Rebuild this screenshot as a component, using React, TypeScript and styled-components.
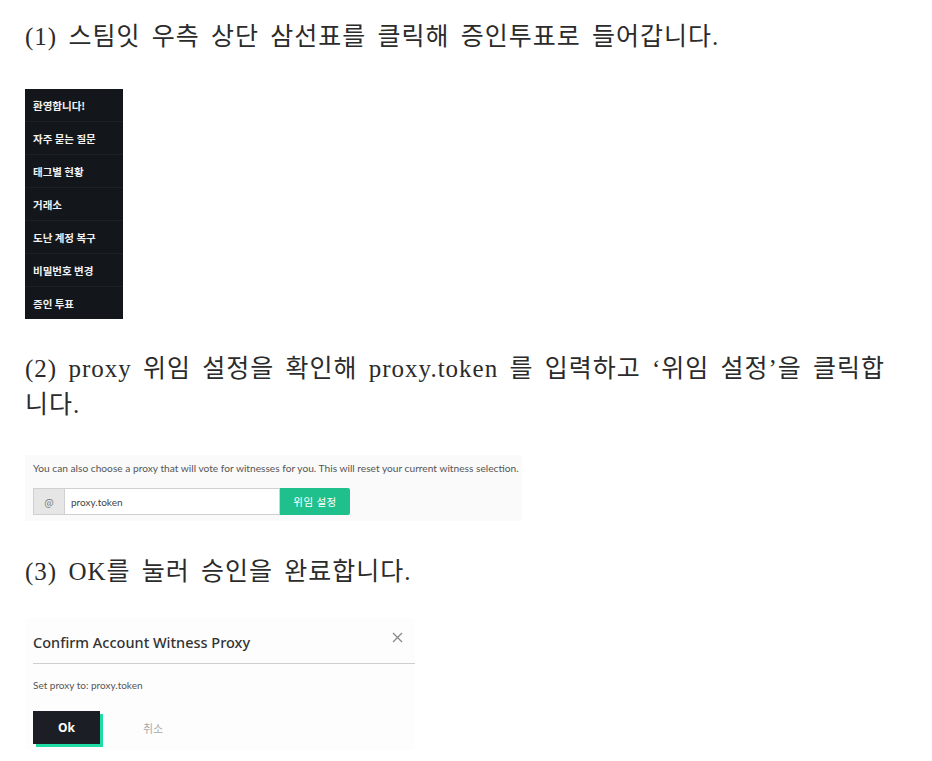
import React from 'react';
import styled, { createGlobalStyle } from 'styled-components';

const GlobalStyle = createGlobalStyle`
  html, body {
    margin: 0;
    padding: 0;
    background: #ffffff;
  }
`;

const Article = styled.article`
  padding: 19px 0 0 25px;
  width: 882px;
  display: flex;
  flex-direction: column;
  align-items: flex-start;
`;

const Step = styled.p<{ $gap?: number }>`
  margin: 0 0 ${(p) => p.$gap ?? 34}px 0;
  font-family: "Liberation Serif", "Noto Sans CJK KR", serif;
  font-size: 25px;
  letter-spacing: 1px;
  word-spacing: 4px;
  line-height: 36px;
  color: #2b2b2b;
`;

const Shot = styled.div<{ $gap?: number }>`
  margin-bottom: ${(p) => p.$gap ?? 32}px;
  font-family: "Noto Sans CJK KR", "Noto Sans", sans-serif;
`;

/* --- menu screenshot --- */
const Menu = styled.ul`
  list-style: none;
  margin: 0;
  padding: 0;
  width: 98px;
  background: #13171c;
`;

const MenuItem = styled.li`
  height: 33px;
  box-sizing: border-box;
  display: flex;
  align-items: center;
  padding-left: 8px;
  font-size: 10.5px;
  font-weight: 700;
  color: #f2f2f2;
  border-bottom: 1px solid #1c2127;
  &:last-child {
    border-bottom: none;
    height: 32px;
  }
`;

/* --- proxy screenshot --- */
const ProxyPanel = styled.div`
  width: 497px;
  height: 66px;
  background: #fafafa;
  padding: 6px 0 0 8px;
  box-sizing: border-box;
`;

const Hint = styled.div`
  font-family: "Lato", "Noto Sans CJK KR", sans-serif;
  font-size: 10.2px;
  color: #555;
  line-height: 14px;
  white-space: nowrap;
`;

const InputRow = styled.div`
  display: flex;
  height: 27px;
  margin-top: 13px;
`;

const Addon = styled.div`
  width: 30px;
  display: flex;
  align-items: center;
  justify-content: center;
  background: #e6e6e6;
  border: 1px solid #d0d0d0;
  border-right: none;
  color: #777;
  font-size: 10px;
`;

const Field = styled.div`
  width: 216px;
  display: flex;
  align-items: center;
  padding-left: 6px;
  box-sizing: border-box;
  background: #fff;
  border: 1px solid #d0d0d0;
  font-family: "Lato", sans-serif;
  font-size: 10px;
  color: #444;
`;

const GreenButton = styled.div`
  width: 70px;
  display: flex;
  align-items: center;
  justify-content: center;
  background: #20c08c;
  border-radius: 0 2px 2px 0;
  color: #fff;
  font-size: 10.5px;
  letter-spacing: 0.5px;
`;

/* --- modal screenshot --- */
const Modal = styled.div`
  width: 390px;
  height: 132px;
  background: #fdfdfd;
  padding: 0 0 0 8px;
  box-sizing: border-box;
`;

const ModalHead = styled.div`
  height: 46px;
  display: flex;
  align-items: center;
  justify-content: space-between;
  border-bottom: 1px solid #cfcfcf;
  padding-top: 2px;
  box-sizing: border-box;
`;

const ModalTitle = styled.div`
  font-family: "Noto Sans", sans-serif;
  font-size: 14.5px;
  font-weight: 500;
  color: #333;
`;

const Close = styled.div`
  width: 18px;
  height: 18px;
  margin: -8px 9px 0 0;
  display: flex;
  align-items: center;
  justify-content: center;
`;

const ModalBody = styled.div`
  padding-top: 14px;
  font-family: "Lato", sans-serif;
  font-size: 10px;
  color: #555;
  line-height: 14px;
`;

const Actions = styled.div`
  display: flex;
  align-items: center;
  margin-top: 19px;
`;

const OkButton = styled.div`
  width: 67px;
  height: 33px;
  display: flex;
  align-items: center;
  justify-content: center;
  background: #1b1f25;
  color: #fff;
  font-family: "Noto Sans", sans-serif;
  font-size: 12px;
  font-weight: 700;
  box-shadow: 3px 3px 0 #1fdba4;
`;

const Cancel = styled.div`
  margin-left: 43px;
  font-size: 11px;
  color: #aaa;
`;

const menuItems = ['환영합니다!', '자주 묻는 질문', '태그별 현황', '거래소', '도난 계정 복구', '비밀번호 변경', '증인 투표'];

export default function App() {
  return (
    <>
      <GlobalStyle />
      <Article>
        <Step>(1) 스팀잇 우측 상단 삼선표를 클릭해 증인투표로 들어갑니다.</Step>
        <Shot>
          <Menu>
            {menuItems.map((m) => (
              <MenuItem key={m}>{m}</MenuItem>
            ))}
          </Menu>
        </Shot>
        <Step $gap={32}>(2) proxy 위임 설정을 확인해 proxy.token 를 입력하고 ‘위임 설정’을 클릭합니다.</Step>
        <Shot $gap={33}>
          <ProxyPanel>
            <Hint>You can also choose a proxy that will vote for witnesses for you. This will reset your current witness selection.</Hint>
            <InputRow>
              <Addon>@</Addon>
              <Field>proxy.token</Field>
              <GreenButton>위임 설정</GreenButton>
            </InputRow>
          </ProxyPanel>
        </Shot>
        <Step $gap={28}>(3) OK를 눌러 승인을 완료합니다.</Step>
        <Shot>
          <Modal>
            <ModalHead>
              <ModalTitle>Confirm Account Witness Proxy</ModalTitle>
              <Close>
                <svg width="11" height="11" viewBox="0 0 11 11">
                  <path d="M1 1 L10 10 M10 1 L1 10" stroke="#888" strokeWidth="1.3" />
                </svg>
              </Close>
            </ModalHead>
            <ModalBody>Set proxy to: proxy.token</ModalBody>
            <Actions>
              <OkButton>Ok</OkButton>
              <Cancel>취소</Cancel>
            </Actions>
          </Modal>
        </Shot>
      </Article>
    </>
  );
}
